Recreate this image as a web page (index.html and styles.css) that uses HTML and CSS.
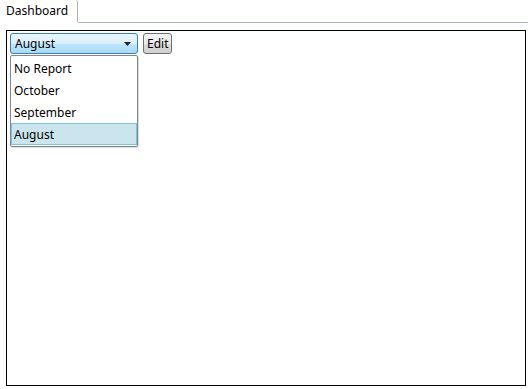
FILE: index.html
```html
<!DOCTYPE html>
<html lang="en">
<head>
    <meta charset="UTF-8">
    <meta name="viewport" content="width=device-width, initial-scale=1.0">
    <title>Dashboard</title>
    <link rel="stylesheet" href="styles.css">
</head>
<body>
    <div class="tabs">
        <div class="tab">Dashboard</div>
        <div class="tab-rest"></div>
    </div>
    <div class="panel">
        <div class="toolbar">
            <div class="combo-wrap">
                <div class="combo">
                    <span>August</span>
                    <svg class="arrow" width="7" height="4" viewBox="0 0 7 4"><path d="M0 0h7L3.5 4z" fill="#222"/></svg>
                </div>
                <ul class="dropdown">
                    <li>No Report</li>
                    <li>October</li>
                    <li>September</li>
                    <li class="selected">August</li>
                </ul>
            </div>
            <button class="edit">Edit</button>
        </div>
    </div>
</body>
</html>
```
FILE: styles.css
```css
body {
    margin: 0;
    font-family: "Noto Sans", sans-serif;
    font-size: 12px;
    color: #000;
    background-color: white;
}
.tabs {
    display: flex;
    height: 23px;
}
.tab {
    width: 71px;
    height: 22px;
    padding-left: 6px;
    line-height: 22px;
    border-right: 1px solid #a9b3c1;
    border-top-right-radius: 2px;
}
.tab-rest {
    flex: 1;
    border-bottom: 1px solid #a9b3c1;
}
.panel {
    box-sizing: border-box;
    margin: 7px 2px 0 6px;
    height: 356px;
    border: 1px solid #000;
    padding: 2px 3px;
}
.toolbar {
    display: flex;
    gap: 5px;
}
.combo-wrap {
    position: relative;
}
.combo {
    box-sizing: border-box;
    width: 128px;
    height: 21px;
    padding: 0 5px 0 4px;
    display: flex;
    align-items: center;
    justify-content: space-between;
    border: 1px solid #3c7fb1;
    border-radius: 3px;
    background: linear-gradient(#eaf6fd 0%, #d9f0fc 50%, #bee6fd 51%, #a7d9f5 100%);
}
.arrow {
    margin-right: 1px;
}
.dropdown {
    position: absolute;
    top: 22px;
    left: 0;
    width: 126px;
    margin: 0;
    padding: 1px 0;
    list-style: none;
    background-color: white;
    border: 1px solid #828790;
    border-radius: 2px;
    box-shadow: 1px 1px 1px rgba(0, 0, 0, 0.15);
}
.dropdown li {
    box-sizing: border-box;
    height: 22px;
    line-height: 22px;
    padding-left: 2px;
    border: 1px solid transparent;
}
.dropdown li.selected {
    background-color: #cbe5ee;
    border-color: #7ec4dd;
}
.edit {
    height: 21px;
    margin: 0;
    padding: 0 3px;
    border: 1px solid #707070;
    border-radius: 3px;
    background: linear-gradient(#f2f2f2 0%, #ebebeb 50%, #dddddd 51%, #cfcfcf 100%);
    font-family: "Noto Sans", sans-serif;
    font-size: 12px;
    color: #000;
}
```
